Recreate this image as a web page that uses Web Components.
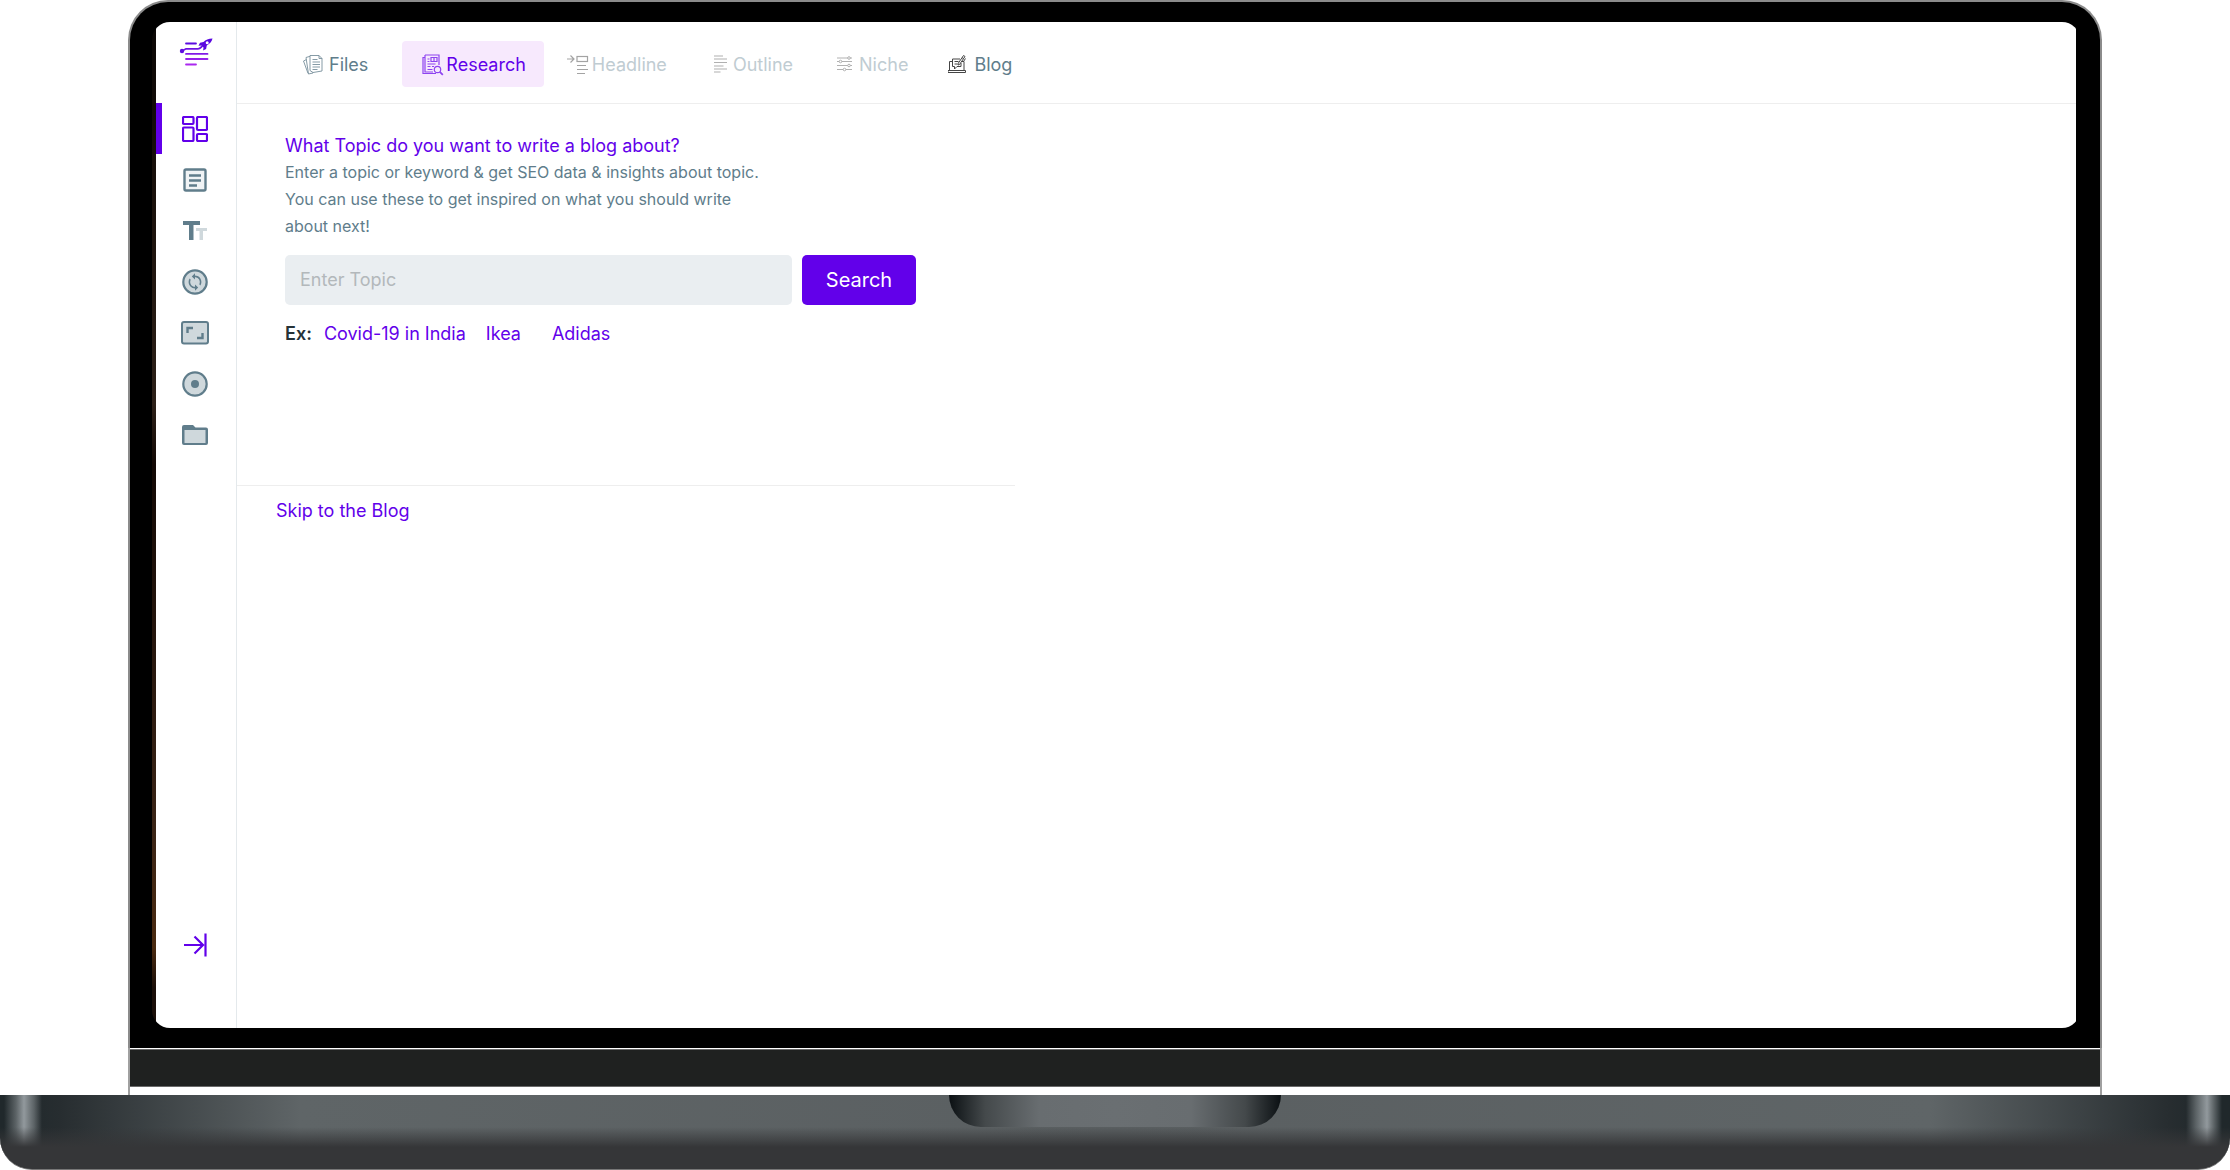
<!DOCTYPE html>
<html lang="en">
<head>
  <meta charset="utf-8">
  <meta name="viewport" content="width=device-width, initial-scale=1">
  <title>Blog Research</title>
  <style>
    body {
      margin: 0;
      background-color: #fff;
      font-family: Inter, "Liberation Sans", sans-serif;
    }
  </style>
</head>
<body>
  <laptop-frame>
    <side-bar slot="sidebar"></side-bar>
    <tab-bar>
      <nav-tab icon="files" class="first">Files</nav-tab>
      <nav-tab icon="research" active>Research</nav-tab>
      <nav-tab icon="headline" disabled>Headline</nav-tab>
      <nav-tab icon="outline" disabled>Outline</nav-tab>
      <nav-tab icon="niche" disabled>Niche</nav-tab>
      <nav-tab icon="blog">Blog</nav-tab>
    </tab-bar>
    <topic-search></topic-search>
    <skip-link></skip-link>
  </laptop-frame>

  <script>
    const icons = {
      logo: {
        width: 34, height: 28,
        body: `
          <defs>
            <linearGradient id="g" x1="0" y1="0" x2="0" y2="28" gradientUnits="userSpaceOnUse">
              <stop offset="0.2" stop-color="#5a0be0"/>
              <stop offset="1" stop-color="#b02af0"/>
            </linearGradient>
          </defs>
          <g fill="none" stroke="url(#g)" stroke-width="1.800" stroke-linecap="round">
            <path d="M7 5.500h10M7 15.900h21.500M7 21h21.500M7 26.500h10"/>
            <path d="M3 13l4-2.200h12c2 0 2.500-1 4-2.500"/>
          </g>
          <circle cx="3" cy="13" r="2.200" fill="#5f0fe0"/>
          <path fill="#5a08e0" fill-rule="evenodd" d="M33.500 .5c-4 0-7 1.200-9 3.500l-3.500.8-1.500 3 3-.3 2 2-.4 3 3-1.600.7-3.400c3-1.800 5.200-4 5.700-7zM28.200 3.300a1.500 1.500 0 1 1 0 3 1.500 1.500 0 0 1 0-3z"/>`
      },
      dashboard: {
        width: 26, height: 26,
        body: `<g fill="none" stroke="#6200ea" stroke-width="2.200">
          <rect x="1" y="1" width="10.500" height="7" rx="1"/>
          <rect x="15" y="1" width="10" height="13" rx="1"/>
          <rect x="1" y="11.500" width="10.500" height="13.500" rx="1"/>
          <rect x="15" y="18" width="10" height="7" rx="1"/>
        </g>`
      },
      article: {
        width: 24, height: 24,
        body: `<rect x="1.500" y="1.500" width="21" height="21" rx="1.500" fill="#f0f3f5" stroke="#607d8b" stroke-width="2.400"/>
          <path d="M6 7.500h12M6 12.500h12M6 17.500h8" fill="none" stroke="#607d8b" stroke-width="2.400"/>`
      },
      text: {
        width: 26, height: 20,
        body: `<path fill="#607d8b" d="M1 0h17v4h-6.500v15h-4.500V4H1z"/>
          <path fill="#cfd8dc" d="M14 7h11v3h-4v9h-3.500v-9H14z"/>`
      },
      sync: {
        width: 26, height: 26,
        body: `<circle cx="13" cy="13" r="11.700" fill="#cfd8dc" stroke="#607d8b" stroke-width="2.200"/>
          <path fill="#607d8b" transform="translate(3.400 3.400) scale(.8)" d="M12 4V1L8 5l4 4V6c3.310 0 6 2.690 6 6 0 1.010-.25 1.970-.7 2.800l1.460 1.460C19.540 15.030 20 13.570 20 12c0-4.420-3.580-8-8-8zm0 14c-3.310 0-6-2.690-6-6 0-1.010.25-1.970.7-2.800L5.240 7.740C4.460 8.970 4 10.430 4 12c0 4.420 3.580 8 8 8v3l4-4-4-4v3z"/>`
      },
      aspect: {
        width: 28, height: 24,
        body: `<rect x="1" y="1" width="26" height="21.500" rx="2" fill="#cfd8dc" stroke="#607d8b" stroke-width="2"/>
          <path d="M6.500 12V7h5.500M21.500 12v5h-5.500" fill="none" stroke="#607d8b" stroke-width="2.400"/>`
      },
      record: {
        width: 26, height: 26,
        body: `<circle cx="13" cy="13" r="11.700" fill="#cfd8dc" stroke="#607d8b" stroke-width="2.200"/>
          <circle cx="13" cy="13" r="4" fill="#607d8b"/>`
      },
      folder: {
        width: 26, height: 22,
        body: `<path fill="#607d8b" d="M2 1h9l2.500 2.500H24a2 2 0 0 1 2 2V19a2 2 0 0 1-2 2H2a2 2 0 0 1-2-2V3a2 2 0 0 1 2-2z"/>
          <path fill="#cfd8dc" d="M2.500 6h21v13h-21z"/>`
      },
      collapse: {
        width: 24, height: 24,
        body: `<path d="M1 12h19M11.500 3.500L20 12l-8.500 8.500M22.500 .5v23" fill="none" stroke="#6200ea" stroke-width="2.200"/>`
      },
      files: {
        width: 26, height: 22,
        body: `<g fill="#fff" stroke="#78909c" stroke-width=".9">
          <path d="M0.500 7l4-2 3 13.500-2.500.8z"/>
          <path d="M3 3.500l5-1.500 2 17-4.500 1z"/>
          <path d="M7 1.500h9l3 3V17l-9 1.500-3-2z"/>
          <path d="M16 1.500v3h3M9.500 5.500h5M9.500 8h7.500M9.500 10.500h7.500M9.500 13h7.500M9.500 15.500h5" fill="none"/>
        </g>`
      },
      research: {
        width: 26, height: 22,
        body: `<g fill="none" stroke="#8e44f0" stroke-width="1.200">
          <path d="M5 1h14v10M5 1v17h8M5 3.500H3v16h13"/>
          <path d="M11 3.500h6v4h-6zM14 3.500v4M7.500 5h2M7.500 7.500h2M7.500 10h8M7.500 12.500h3M12 12.500h2M7.500 15.500h5"/>
          <circle cx="17.500" cy="15.500" r="3.200"/>
          <path d="M19.800 17.800l3 3" stroke-width="1.800"/>
        </g>`
      },
      headline: {
        width: 26, height: 22,
        body: `<g fill="none" stroke="#a3a3a3" stroke-width="1.200">
          <path d="M1 5h7M4.500 1.500L8 5 4.500 8.500"/>
          <rect x="11" y="2.500" width="10.500" height="5"/>
          <path d="M11 11.500h9M11 15.500h11M11 19.500h8"/>
        </g>`
      },
      outline: {
        width: 26, height: 22,
        body: `<path d="M7 2h9M7 5h13M7 8.500h13M7 12h9.500M7 15h13M7 18h6.500" fill="none" stroke="#b0b0b0" stroke-width="1.200"/>`
      },
      niche: {
        width: 26, height: 22,
        body: `<g fill="#fff" stroke="#a8a8a8" stroke-width=".9">
          <path d="M4 4h15M4 7.500h15M4 11.500h15M4 15.500h15"/>
          <circle cx="16" cy="4" r="1.300"/>
          <circle cx="7.500" cy="7.500" r="1.300"/>
          <circle cx="16" cy="11.500" r="1.300"/>
          <circle cx="11.500" cy="15.500" r="1.300"/>
        </g>`
      },
      blog: {
        width: 26, height: 22,
        body: `<g fill="none" stroke="#454545" stroke-width="1">
          <path d="M1.500 16V7.500H4M13.500 7.500h2.500V16M0 16.500h17.500v2H0z"/>
          <path d="M12 5H4.500v7.500h2v2.500l2.500-2.500H13V9" fill="#fff"/>
          <path d="M6.500 7.500h4M6.500 10h3"/>
          <path d="M15.500 1.500l1.500 1-5.500 8-1.500.5.300-1.800zM14 3.500l1.500 1.200M17.500 4.500L15.500 7.500"/>
        </g>`
      }
    };

    class UiIcon extends HTMLElement {
      constructor() {
        super();
        this.shadowDOM = this.attachShadow({mode: 'open'});
      }

      connectedCallback() {
        const icon = icons[this.getAttribute('name')];
        this.shadowDOM.innerHTML = `
          <style>
            :host {
              display: inline-flex;
              flex: none;
            }
          </style>
          <svg width="${icon.width}" height="${icon.height}" viewBox="0 0 ${icon.width} ${icon.height}" aria-hidden="true">${icon.body}</svg>
        `;
      }
    }

    class LaptopFrame extends HTMLElement {
      constructor() {
        super();
        this.shadowDOM = this.attachShadow({mode: 'open'});
        this.shadowDOM.innerHTML = `
          <style>
            * {
              box-sizing: border-box;
            }

            :host {
              display: flex;
              flex-direction: column;
              min-height: 100vh;
            }

            .lid {
              flex: 1;
              display: flex;
              margin: 0 128px;
              padding: 20px 20px 20px 22px;
              background-color: #000;
              border: 2px solid #8b8b8b;
              border-bottom: 0;
              border-radius: 40px 40px 0 0;
            }

            /* sliver of wallpaper left of the app window */
            .wallpaper {
              flex: 1;
              display: flex;
              padding: 0 4px;
              border-radius: 18px;
              overflow: hidden;
              background: linear-gradient(#0a0604, #1c120c 20%, #2c2018 38%, #120804 44%, #3a2416 80%, #4a2a10 92%, #1a0e08 96%) no-repeat left / 4px 100%;
            }

            .screen {
              flex: 1;
              display: flex;
              background-color: #fff;
            }

            main {
              flex: 1;
              min-width: 0;
            }

            .hinge {
              height: 47px;
              margin: 0 128px;
              padding-top: 1px;
              border: solid #a0a0a0;
              border-width: 0 2px;
            }

            .hinge div {
              height: 38px;
              background-color: #1f2120;
              border: solid #6a6a6a;
              border-width: 1px 0;
            }

            .base {
              height: 75px;
              border-bottom: 1px solid #777;
              border-radius: 0 0 32px 32px;
              background:
                linear-gradient(transparent 32px, #353638 52px),
                linear-gradient(90deg,
                  #20282b 4px, #5c6366 16px, #92999d 24px, #5c6366 34px, #242b2e 42px,
                  #272d30 60px, #5f6567 300px, #5a5f61 50%,
                  #5f6567 calc(100% - 300px), #272d30 calc(100% - 60px),
                  #242b2e calc(100% - 44px), #5c6366 calc(100% - 34px), #92999d calc(100% - 23px),
                  #5c6366 calc(100% - 16px), #20282b calc(100% - 8px));
            }

            .notch {
              width: 332px;
              height: 32px;
              margin: 0 auto;
              border-radius: 0 0 32px 32px;
              background: linear-gradient(90deg, #0b1013, #44494b 36px, #686d70 90px, #6a6f72 50%, #686d70 calc(100% - 90px), #44494b calc(100% - 36px), #0b1013);
            }
          </style>
          <div class="lid">
            <div class="wallpaper">
              <div class="screen">
                <slot name="sidebar"></slot>
                <main><slot></slot></main>
              </div>
            </div>
          </div>
          <div class="hinge"><div></div></div>
          <div class="base"><div class="notch"></div></div>
        `;
      }
    }

    class SideBar extends HTMLElement {
      constructor() {
        super();
        this.shadowDOM = this.attachShadow({mode: 'open'});
        const items = ['dashboard', 'article', 'text', 'sync', 'aspect', 'record', 'folder'];
        this.shadowDOM.innerHTML = `
          <style>
            * {
              box-sizing: border-box;
            }

            :host {
              display: flex;
              flex: none;
              flex-direction: column;
              width: 81px;
              border-right: 1px solid #e4e9ec;
              box-sizing: border-box;
            }

            .logo {
              height: 81px;
              padding-top: 16px;
              text-align: center;
            }

            a {
              display: flex;
              align-items: center;
              justify-content: center;
              height: 51px;
              padding-right: 2px;
            }

            a.active {
              padding-right: 8px;
              border-left: 6px solid #6200ea;
            }

            button {
              display: flex;
              align-items: center;
              justify-content: center;
              height: 50px;
              margin: auto 0 58px;
              padding: 0 2px 0 0;
              border: 0;
              background: none;
            }
          </style>
          <div class="logo"><ui-icon name="logo"></ui-icon></div>
          <nav>
            ${items.map((name, i) => `<a href="#${name}" class="${i === 0 ? 'active' : ''}" aria-label="${name}"><ui-icon name="${name}"></ui-icon></a>`).join('')}
          </nav>
          <button type="button" aria-label="Expand"><ui-icon name="collapse"></ui-icon></button>
        `;
      }
    }

    class TabBar extends HTMLElement {
      constructor() {
        super();
        this.shadowDOM = this.attachShadow({mode: 'open'});
        this.shadowDOM.innerHTML = `
          <style>
            :host {
              display: block;
              border-bottom: 1px solid #eee;
            }

            nav {
              display: flex;
              align-items: center;
              gap: 4px;
              height: 79px;
              padding: 2px 0 0 48px;
            }

            ::slotted(.first) {
              margin-right: 12px;
            }
          </style>
          <nav><slot></slot></nav>
        `;
      }
    }

    class NavTab extends HTMLElement {
      constructor() {
        super();
        this.shadowDOM = this.attachShadow({mode: 'open'});
      }

      connectedCallback() {
        this.shadowDOM.innerHTML = `
          <style>
            :host {
              display: block;
            }

            button {
              display: flex;
              align-items: center;
              height: 46px;
              padding: 2px 18px 0;
              border: 0;
              border-radius: 4px;
              background: none;
              color: #607d8b;
              font: 18px/24px Inter, "Liberation Sans", sans-serif;
            }

            button:disabled {
              color: #c0ccd2;
            }

            :host([active]) button {
              background-color: #f7e9fd;
              color: #6200ea;
            }
          </style>
          <button type="button" ${this.hasAttribute('disabled') ? 'disabled' : ''}>
            <ui-icon name="${this.getAttribute('icon')}"></ui-icon>
            <slot></slot>
          </button>
        `;
      }
    }

    class TopicSearch extends HTMLElement {
      constructor() {
        super();
        this.shadowDOM = this.attachShadow({mode: 'open'});
        this.shadowDOM.innerHTML = `
          <style>
            * {
              box-sizing: border-box;
            }

            :host {
              display: block;
              max-width: 778px;
              min-height: 382px;
              padding: 28px 99px 0 48px;
              border-bottom: 1px solid #eee;
              box-sizing: border-box;
            }

            label {
              display: block;
              color: #6200ea;
              font-size: 18px;
              line-height: 27px;
            }

            p {
              max-width: 490px;
              margin: 0 0 15px;
              color: #607d8b;
              font-size: 16px;
              line-height: 27px;
            }

            form {
              display: flex;
              gap: 10px;
              height: 50px;
            }

            input {
              flex: 1;
              min-width: 0;
              padding: 0 15px;
              border: 0;
              border-radius: 5px;
              background-color: #eaeef1;
              font: 18px/24px Inter, "Liberation Sans", sans-serif;
            }

            input::placeholder {
              color: #b3b8bb;
            }

            button {
              width: 114px;
              padding: 0;
              border: 0;
              border-radius: 5px;
              background-color: #6200ea;
              color: #fff;
              font: 20px/24px Inter, "Liberation Sans", sans-serif;
            }

            .examples {
              display: flex;
              gap: 20px;
              margin-top: 15px;
              font-size: 18px;
              line-height: 27px;
            }

            b {
              margin-right: -8px;
              color: #263238;
              font-weight: 600;
            }

            a {
              color: #6200ea;
              text-decoration: none;
            }

            a:last-child {
              margin-left: 11px;
            }
          </style>
          <label for="topic">What Topic do you want to write a blog about?</label>
          <p>Enter a topic or keyword &amp; get SEO data &amp; insights about topic. You can use these to get inspired on what you should write about next!</p>
          <form>
            <input id="topic" type="text" placeholder="Enter Topic">
            <button type="button">Search</button>
          </form>
          <div class="examples">
            <b>Ex:</b>
            <a href="#covid">Covid-19 in India</a>
            <a href="#ikea">Ikea</a>
            <a href="#adidas">Adidas</a>
          </div>
        `;
      }
    }

    class SkipLink extends HTMLElement {
      constructor() {
        super();
        this.shadowDOM = this.attachShadow({mode: 'open'});
        this.shadowDOM.innerHTML = `
          <style>
            :host {
              display: block;
              padding: 11px 39px;
              font-size: 18px;
              line-height: 27px;
            }

            a {
              color: #6200ea;
              text-decoration: none;
            }
          </style>
          <a href="#blog">Skip to the Blog</a>
        `;
      }
    }

    customElements.define('ui-icon', UiIcon);
    customElements.define('laptop-frame', LaptopFrame);
    customElements.define('side-bar', SideBar);
    customElements.define('tab-bar', TabBar);
    customElements.define('nav-tab', NavTab);
    customElements.define('topic-search', TopicSearch);
    customElements.define('skip-link', SkipLink);
  </script>
</body>
</html>
